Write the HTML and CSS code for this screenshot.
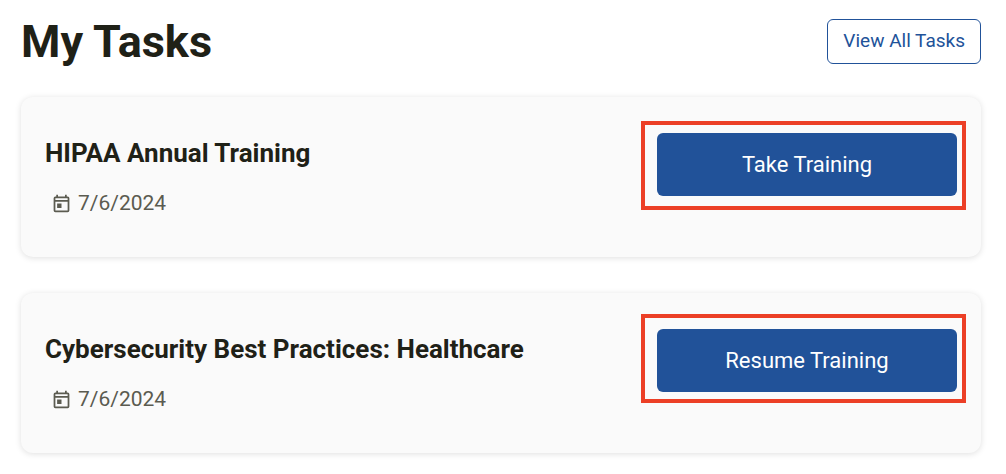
FILE: index.html
```html
<!DOCTYPE html>
<html lang="en">
<head>
    <meta charset="UTF-8">
    <meta name="viewport" content="width=device-width, initial-scale=1">
    <title>My Tasks</title>
    <link rel="stylesheet" href="styles.css">
</head>
<body>
    <main class="tasks">
        <header class="tasks-header">
            <h1>My Tasks</h1>
            <a class="view-all" href="#">View All Tasks</a>
        </header>

        <section class="card">
            <div class="info">
                <h2>HIPAA Annual Training</h2>
                <p class="date">
                    <svg class="icon" viewBox="0 0 24 24" aria-hidden="true"><path d="M19 4h-1V2h-2v2H8V2H6v2H5a2 2 0 0 0-2 2v14a2 2 0 0 0 2 2h14a2 2 0 0 0 2-2V6a2 2 0 0 0-2-2zm0 16H5V10h14v10zm0-12H5V6h14v2zM7 12h5v5H7z"/></svg>
                    <time datetime="2024-07-06">7/6/2024</time>
                </p>
            </div>
            <div class="action">
                <button type="button">Take Training</button>
                <span class="highlight"></span>
            </div>
        </section>

        <section class="card">
            <div class="info">
                <h2>Cybersecurity Best Practices: Healthcare</h2>
                <p class="date">
                    <svg class="icon" viewBox="0 0 24 24" aria-hidden="true"><path d="M19 4h-1V2h-2v2H8V2H6v2H5a2 2 0 0 0-2 2v14a2 2 0 0 0 2 2h14a2 2 0 0 0 2-2V6a2 2 0 0 0-2-2zm0 16H5V10h14v10zm0-12H5V6h14v2zM7 12h5v5H7z"/></svg>
                    <time datetime="2024-07-06">7/6/2024</time>
                </p>
            </div>
            <div class="action">
                <button type="button">Resume Training</button>
                <span class="highlight highlight-raised"></span>
            </div>
        </section>
    </main>
</body>
</html>
```

FILE: styles.css
```css
*{
    margin:0;
    padding:0;
    box-sizing: border-box;
}
body{
    background: #fff;
    color: #1f2117;
    font-family: Roboto, "Liberation Sans", sans-serif;
}
.tasks{
    display: flex;
    flex-direction: column;
    padding: 15px 25px 20px 21px;
}
.tasks-header{
    display: flex;
    justify-content: space-between;
    align-items: center;
    margin-bottom: 29px;
}
.tasks-header h1{
    font-size: 45px;
    line-height: 53px;
}
.view-all{
    height: 45px;
    padding: 0 15px;
    border: 1px solid #215299;
    border-radius: 6px;
    background: #fff;
    color: #215299;
    font-size: 19px;
    line-height: 42px;
    text-decoration: none;
}
.card{
    display: flex;
    justify-content: space-between;
    align-items: flex-start;
    gap: 24px;
    padding: 36px 24px 38px;
    border-radius: 12px;
    background: #fafafa;
    box-shadow: 0 1px 6px rgba(0,0,0,0.13);
}
.card + .card{
    margin-top: 36px;
}
.info h2{
    font-size: 26px;
    line-height: 40px;
}
.date{
    display: flex;
    align-items: center;
    gap: 6px;
    margin: 15px 0 1px;
    padding-left: 6px;
    color: #5b5b50;
    font-size: 21px;
    line-height: 30px;
}
.icon{
    width: 21px;
    height: 21px;
    fill: #5b5b50;
}
.action{
    position: relative;
    flex: 0 0 300px;
}
.action button{
    width: 100%;
    height: 63px;
    border: none;
    border-radius: 6px;
    background: #215299;
    color: #fff;
    font-family: inherit;
    font-size: 22px;
    cursor: pointer;
}
/* red frame drawn over the action button */
.highlight{
    position: absolute;
    top: -12px;
    left: -16px;
    right: -9px;
    height: 89px;
    border: 4px solid #ec3f26;
    pointer-events: none;
}
.highlight-raised{
    top: -15px;
}
```
